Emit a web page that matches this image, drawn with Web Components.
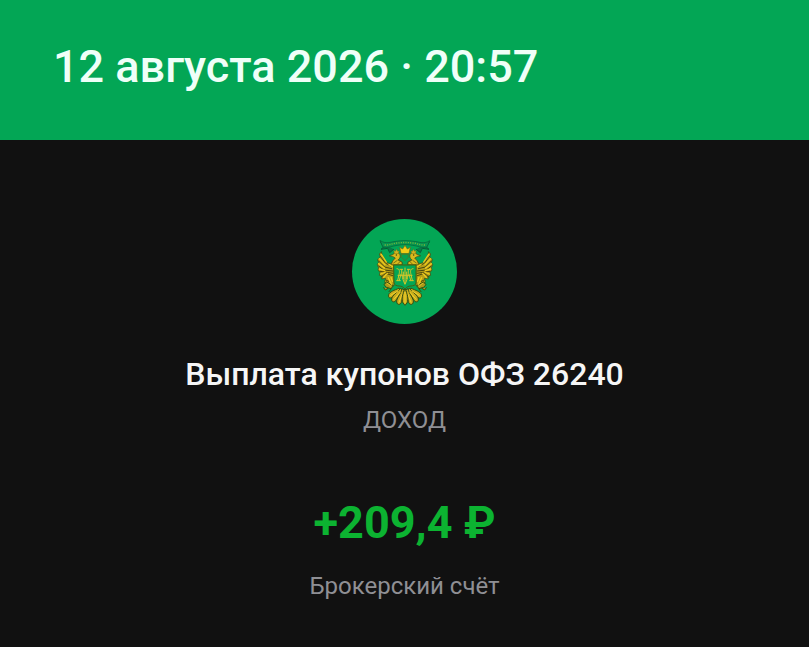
<!DOCTYPE html>
<html lang="ru">
<head>
<meta charset="utf-8">
<meta name="viewport" content="width=device-width, initial-scale=1">
<title>Выплата купонов</title>
<style>
    html {
        background: #111111;
    }

    body {
        --green: #03a655;
        --text: #f6f6f6;
        --muted: #8f8f94;
        --income: #0cb331;
        margin: 0;
        color: var(--text);
        font-family: Roboto, "Liberation Sans", sans-serif;
    }
</style>
</head>
<body>
<operation-page>
    <date-header slot="header">12 августа 2026 · 20:57</date-header>
    <operation-details>
        <issuer-logo slot="logo"></issuer-logo>
        <span slot="title">Выплата купонов ОФЗ 26240</span>
        <span slot="category">ДОХОД</span>
        <span slot="amount">+209,4 ₽</span>
        <span slot="account">Брокерский счёт</span>
    </operation-details>
</operation-page>

<script>
class OperationPage extends HTMLElement {
    constructor() {
        super();
        this.attachShadow({ mode: 'open' });
    }

    connectedCallback() {
        this.shadowRoot.innerHTML = `
            <style>
                :host {
                    display: flex;
                    flex-direction: column;
                }
            </style>
            <slot name="header"></slot>
            <main><slot></slot></main>
        `;
    }
}

class DateHeader extends HTMLElement {
    constructor() {
        super();
        this.attachShadow({ mode: 'open' });
    }

    connectedCallback() {
        this.shadowRoot.innerHTML = `
            <style>
                :host {
                    display: block;
                    background: var(--green);
                    color: #effff8;
                    padding: 39px 53px 45px;
                }

                header {
                    font-size: 45px;
                    font-weight: 500;
                    line-height: 56px;
                }
            </style>
            <header><slot></slot></header>
        `;
    }
}

class OperationDetails extends HTMLElement {
    constructor() {
        super();
        this.attachShadow({ mode: 'open' });
    }

    connectedCallback() {
        this.shadowRoot.innerHTML = `
            <style>
                :host {
                    display: flex;
                    flex-direction: column;
                    align-items: center;
                    gap: 59px;
                    padding: 79px 24px 32px;
                    text-align: center;
                }

                .summary,
                .total {
                    display: flex;
                    flex-direction: column;
                    align-items: center;
                }

                .total {
                    gap: 19px;
                }

                h1,
                p {
                    margin: 0;
                }

                h1 {
                    margin: 30px 0 10px;
                    font-size: 32px;
                    font-weight: 500;
                    line-height: 40px;
                }

                .muted {
                    color: var(--muted);
                    font-size: 24px;
                    line-height: 32px;
                }

                .amount {
                    color: var(--income);
                    font-size: 45px;
                    font-weight: 700;
                    line-height: 56px;
                }
            </style>
            <section class="summary">
                <slot name="logo"></slot>
                <h1><slot name="title"></slot></h1>
                <p class="muted"><slot name="category"></slot></p>
            </section>
            <section class="total">
                <p class="amount"><slot name="amount"></slot></p>
                <p class="muted"><slot name="account"></slot></p>
            </section>
        `;
    }
}

class IssuerLogo extends HTMLElement {
    constructor() {
        super();
        this.attachShadow({ mode: 'open' });
    }

    connectedCallback() {
        this.shadowRoot.innerHTML = `
            <style>
                :host {
                    display: block;
                    width: 105px;
                    height: 105px;
                    border-radius: 50%;
                    background: var(--green);
                }

                svg {
                    display: block;
                    width: 100%;
                    height: 100%;
                }
            </style>
            <svg viewBox="21 21 315 315" aria-hidden="true" stroke-linejoin="round" stroke-linecap="round">
                <defs>
                    <g id="half">
                        <!-- ribbon end -->
                        <path d="M107 90L116 105L108 112L128 109L134 122L146 112" fill="#087d48" stroke="#075b36" stroke-width="3"/>
                        <!-- wing -->
                        <path d="M109 120L103 126L106 135L98 142L101 152L97 158L101 167L99 174L105 181L103 190L112 193L110 201L122 199L119 209L123 219L133 223L147 221V158H171V150L160 144L144 147L138 156L127 152C117 145 112 134 109 120Z" fill="#b79f18" stroke="#3b4a12" stroke-width="2"/>
                        <path d="M106 133L121 153L138 163M101 147L119 165L140 170M101 162L116 174L143 177M105 178L119 180L144 184M108 195L122 184L143 191M123 204L131 208" fill="none" stroke="#4a470f" stroke-width="3"/>
                        <path d="M109 127L124 150M103 140L120 158M101 155L118 168M103 171L119 176M107 186L122 180M116 196L127 184M130 197L138 214M138 196L142 208M132 158L143 164" fill="none" stroke="#f0cc1e" stroke-width="4"/>
                        <!-- neck and head -->
                        <path d="M134 131L145 127C147 120 156 119 162 124C168 130 166 139 159 144L171 151V158H139L143 147L151 138L144 134Z" fill="#d8b91c" stroke="#454912" stroke-width="2"/>
                        <path d="M148 123L146 115L151 118L155 111L158 118L163 117L160 124Z" fill="#d0b421" stroke="#5e5b13" stroke-width="1"/>
                        <circle cx="154" cy="129" r="2" fill="#303d13"/>
                        <path d="M146 153L157 145M158 156L165 149" stroke="#544d0d" stroke-width="2"/>
                        <!-- leg and claw -->
                        <path d="M125 210L145 221L138 230L124 226L118 219ZM129 229L121 234L116 227M139 230L132 239" fill="#ad9a1b" stroke="#36510f" stroke-width="3"/>
                        <path d="M127 214L137 222M134 211L140 218" stroke="#dfc126" stroke-width="3"/>
                        <!-- tail feathers -->
                        <g fill="#c9ac1c" stroke="#344d12" stroke-width="3">
                            <path d="M161 229C148 235 134 239 131 248C128 258 137 261 144 254L166 235Z"/>
                            <path d="M166 230C157 241 141 250 140 261C139 272 150 272 154 263L173 236Z"/>
                            <path d="M171 231C167 247 154 259 155 270C157 281 168 279 170 268L178 235Z"/>
                        </g>
                        <path d="M137 250L159 237M147 262L166 240M162 271L173 243" stroke="#f0d12c" stroke-width="3"/>
                    </g>
                </defs>
                <use href="#half"/>
                <use href="#half" transform="translate(360 0) scale(-1 1)"/>
                <path d="M180 230C172 246 169 261 174 273L180 280L186 273C191 261 188 246 180 230Z" fill="#c9ac1c" stroke="#344d12" stroke-width="3"/>
                <path d="M180 241V272" stroke="#f3d52c" stroke-width="3"/>
                <!-- ribbon -->
                <path d="M106 86C122 97 137 90 153 88C171 85 189 85 207 88C223 90 238 97 254 86L246 105C229 109 216 101 203 100C187 97 173 97 157 100C144 101 131 109 114 105Z" fill="#079650" stroke="#075f38" stroke-width="2"/>
                <path d="M119 99C135 100 145 93 159 93C173 91 187 91 201 93C215 93 225 100 241 99" fill="none" stroke="#84b638" stroke-width="4" stroke-dasharray="3 4" stroke-linecap="butt"/>
                <!-- crown and the small shield under it -->
                <path d="M168 124L164 106L173 111L180 100L187 111L196 106L192 124Z" fill="#f1cc16" stroke="#6d6412" stroke-width="2"/>
                <path d="M170 127H190V137L180 146L170 137Z" fill="#04a151" stroke="#5c701b" stroke-width="2"/>
                <!-- shield -->
                <path d="M147 159H213V212C213 219 205 222 198 222C190 222 185 225 180 231C175 225 170 222 162 222C155 222 147 219 147 212Z" fill="#03a655" stroke="#46600e" stroke-width="3"/>
                <!-- monogram -->
                <g fill="none" stroke="#d3c629" stroke-width="3">
                    <path d="M156 170C165 170 164 179 162 188L158 205M204 170C195 170 196 179 198 188L202 205M155 206H166M194 206H205"/>
                    <path d="M170 172C169 190 174 205 180 217C186 205 191 190 190 172M168 186L163 205M192 186L197 205"/>
                    <path d="M180 168V213M159 190H201M175 180V200M185 180V200M165 172H173M187 172H195"/>
                </g>
            </svg>
        `;
    }
}

customElements.define('operation-page', OperationPage);
customElements.define('date-header', DateHeader);
customElements.define('operation-details', OperationDetails);
customElements.define('issuer-logo', IssuerLogo);
</script>
</body>
</html>
